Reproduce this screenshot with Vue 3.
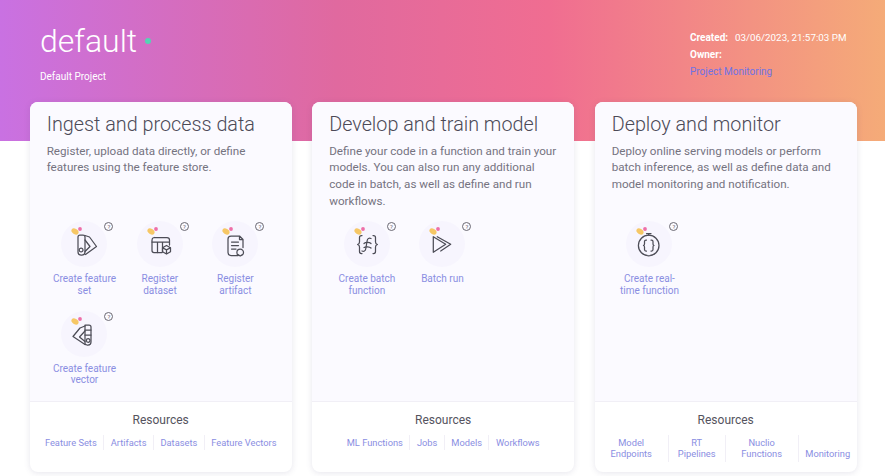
<script setup>
const cards = [
  {
    title: 'Ingest and process data',
    text: 'Register, upload data directly, or define features using the feature store.',
    actions: [
      { icon: 'fan', label: 'Create feature set' },
      { icon: 'table', label: 'Register dataset' },
      { icon: 'doc', label: 'Register artifact' },
      { icon: 'vector', label: 'Create feature vector' }
    ],
    links: ['Feature Sets', 'Artifacts', 'Datasets', 'Feature Vectors']
  },
  {
    title: 'Develop and train model',
    text: 'Define your code in a function and train your models. You can also run any additional code in batch, as well as define and run workflows.',
    actions: [
      { icon: 'code', label: 'Create batch function' },
      { icon: 'play', label: 'Batch run' }
    ],
    links: ['ML Functions', 'Jobs', 'Models', 'Workflows']
  },
  {
    title: 'Deploy and monitor',
    text: 'Deploy online serving models or perform batch inference, as well as define data and model monitoring and notification.',
    actions: [{ icon: 'timer', label: 'Create real-time function' }],
    links: ['Model Endpoints', 'RT Pipelines', 'Nuclio Functions', 'Monitoring'],
    wrapLinks: true
  }
]

const icons = {
  fan: [
    'M17 16a2 2 0 0 1 2-2h3a2 2 0 0 1 2 2v15a3 3 0 0 1-3 3h-1a3 3 0 0 1-3-3z',
    'M24 14.500l4.500 1.500 7 9.500-11 8',
    'M24 19l5 6.500-5 5',
    'M22 29a1.900 1.900 0 1 1-3.800 0a1.900 1.900 0 1 1 3.800 0z'
  ],
  table: [
    'M17 16.500h13a2.500 2.500 0 0 1 2.500 2.500v5M15 19a2.500 2.500 0 0 1 2-2.500M15 19v10.500a2 2 0 0 0 2 2h8',
    'M15 21h17.500M20.500 21v10.500M25.500 21v10',
    'M29.500 24.500l4 2.200v4l-4 2.300-4-2.300v-4zM25.500 26.700l4 2.200 4-2.200M29.500 28.900v4'
  ],
  doc: [
    'M19 15h8.500l3.500 3.500v8M31 18.500h-3.500V15M26 34.500h-7a3 3 0 0 1-3-3V18a3 3 0 0 1 3-3',
    'M19.500 21h7M19.500 24.500h7M19.500 28h4.500',
    'M31.500 31.500a3.300 3.300 0 1 1-6.600 0a3.300 3.300 0 1 1 6.600 0zM26 33.500l2.200 1.500 2.300-1.500'
  ],
  vector: [
    'M24 14h4a2 2 0 0 1 2 2v15a3 3 0 0 1-3 3h-1a3 3 0 0 1-2-1z',
    'M24 15l-5 2-7 8.500 12 8',
    'M24 20l-5.500 6 5.500 4.500',
    'M24 19h6M24 24h6',
    'M29 29.500a1.800 1.800 0 1 1-3.600 0a1.800 1.800 0 1 1 3.600 0z'
  ],
  code: [
    'M18 14.500h-.500a2 2 0 0 0-2 2v4.500a2.500 2.500 0 0 1-2 2.500a2.500 2.500 0 0 1 2 2.500v4.500a2 2 0 0 0 2 2h.500',
    'M29 14.500h.500a2 2 0 0 1 2 2v4.500a2.500 2.500 0 0 0 2 2.500a2.500 2.500 0 0 0-2 2.500v4.500a2 2 0 0 1-2 2H29',
    'M27 17.500c-2-.800-3.500 0-3.800 2l-1.500 8.500c-.300 2-1.800 2.800-3.700 2',
    'M20 22.500c1.500-1.500 5.500-1.500 7 0M20 26.500c1.500-1 5.500-1 7 .500'
  ],
  play: [
    'M14.300 15.700V31.300L26.700 23.300z',
    'M18.300 15.700L31.700 23.300 21.700 30'
  ],
  timer: [
    'M33 24.500a10.300 10.300 0 1 1-20.600 0a10.300 10.300 0 1 1 20.600 0z',
    'M20.500 12.500h4.500M22.700 12.500v1.700',
    'M20.500 19h-.500a1.500 1.500 0 0 0-1.500 1.500v2.500a1.500 1.500 0 0 1-1 1.500a1.500 1.500 0 0 1 1 1.500v2.500a1.500 1.500 0 0 0 1.500 1.500h.500',
    'M25 19h.500a1.500 1.500 0 0 1 1.500 1.500v2.500a1.500 1.500 0 0 0 1 1.500a1.500 1.500 0 0 0-1 1.500v2.500a1.500 1.500 0 0 1-1.500 1.500H25'
  ]
}
</script>

<template>
  <div class="page">
    <header class="hero">
      <div>
        <h1 class="project-name">default <span class="status-dot"></span></h1>
        <p class="project-desc">Default Project</p>
      </div>
      <div class="meta">
        <div class="meta-row"><b>Created:</b><span>03/06/2023, 21:57:03 PM</span></div>
        <div class="meta-row"><b>Owner:</b></div>
        <a class="meta-link">Project Monitoring</a>
      </div>
    </header>

    <main class="cards">
      <section v-for="card in cards" :key="card.title" class="card">
        <div class="card-body">
          <div class="card-head">
            <h2 class="card-title">{{ card.title }}</h2>
            <p class="card-text">{{ card.text }}</p>
          </div>
          <div class="actions">
            <div v-for="action in card.actions" :key="action.label" class="action">
              <div class="action-icon">
                <svg width="46" height="46" viewBox="0 0 46 46" fill="none">
                  <ellipse cx="14" cy="10.500" rx="3.900" ry="2.600" transform="rotate(35 14 10.500)" fill="#f6c765" />
                  <circle cx="19" cy="8" r="1.900" fill="#ee6fa8" />
                  <path
                    v-for="d in icons[action.icon]"
                    :key="d"
                    :d="d"
                    stroke="#4d4d57"
                    stroke-width="1.250"
                    stroke-linecap="round"
                    stroke-linejoin="round"
                  />
                </svg>
                <span class="help">?</span>
              </div>
              <div class="action-label">{{ action.label }}</div>
            </div>
          </div>
        </div>
        <footer class="card-footer">
          <div class="res-title">Resources</div>
          <div class="links" :class="{ 'links-wrap': card.wrapLinks }">
            <a v-for="link in card.links" :key="link" class="res-link">{{ link }}</a>
          </div>
        </footer>
      </section>
    </main>
  </div>
</template>

<style scoped>
.page {
  width: 885px;
  height: 476px;
  overflow: hidden;
  background: #fff;
  font-family: Roboto, "Liberation Sans", sans-serif;
}

.hero {
  height: 141px;
  box-sizing: border-box;
  padding: 19px 37px 0 40px;
  display: flex;
  justify-content: space-between;
  color: #fff;
  background: linear-gradient(90deg, #c971e2 0%, #e0699f 38%, #f06d91 62%, #f5ab78 100%);
}

.project-name {
  margin: 0;
  font-size: 32px;
  line-height: 44px;
  font-weight: 300;
}

.status-dot {
  display: inline-block;
  width: 6px;
  height: 6px;
  border-radius: 50%;
  background: #55d3b4;
  vertical-align: 8px;
}

.project-desc {
  margin: 7px 0 0;
  font-size: 10px;
  line-height: 14px;
}

.meta {
  width: 158px;
  margin-top: 10px;
  font-size: 10px;
  line-height: 17px;
  white-space: nowrap;
}

.meta-row b {
  display: inline-block;
  width: 45px;
  font-weight: 700;
}

.meta-row span {
  font-size: 9.800px;
}

.meta-link {
  color: #6f73e4;
}

.cards {
  display: grid;
  grid-template-columns: repeat(3, 1fr);
  column-gap: 20.5px;
  padding: 0 28.3px 0 29.7px;
  margin-top: -39px;
}

.card {
  height: 370px;
  display: flex;
  flex-direction: column;
  background: #fff;
  border-radius: 8px;
  box-shadow: 0 1px 6px rgba(80, 70, 120, 0.14);
  overflow: hidden;
}

.card-body {
  height: 300px;
  box-sizing: border-box;
  padding: 11px 0 0;
  background: #fbfaff;
  border-bottom: 1px solid #f1eff6;
}

.card-head {
  height: 108px;
  padding: 0 16px 0 17px;
}

.card-title {
  margin: 0;
  font-size: 19.800px;
  line-height: 24px;
  font-weight: 300;
  color: #4c4a57;
}

.card-text {
  margin: 5.500px 0 0;
  font-size: 11.650px;
  line-height: 16.900px;
  font-weight: 400;
  color: #75737f;
}

.actions {
  display: grid;
  grid-template-columns: repeat(3, 75.5px);
  grid-auto-rows: 89.5px;
  padding-left: 17px;
}

.action {
  display: flex;
  flex-direction: column;
  align-items: center;
}

.action-icon {
  position: relative;
  width: 46px;
  height: 46px;
  border-radius: 50%;
  background: #f7f5fe;
}

.action-icon svg {
  display: block;
}

.help {
  position: absolute;
  left: 43px;
  top: 1px;
  width: 7px;
  height: 7px;
  border: 1px solid #6b6973;
  border-radius: 50%;
  font-size: 6px;
  line-height: 7px;
  text-align: center;
  color: #6b6973;
}

.action-label {
  width: 66px;
  margin-top: 6px;
  font-size: 10px;
  line-height: 11.500px;
  text-align: center;
  color: #8a8ee2;
}

.card-footer {
  flex: 1;
  text-align: center;
  padding-top: 10px;
}

.res-title {
  font-size: 12px;
  line-height: 16px;
  color: #55535e;
}

.links {
  display: flex;
  justify-content: center;
  margin-top: 7px;
}

.res-link {
  padding: 2px 6.500px;
  font-size: 9.300px;
  line-height: 11px;
  color: #8a8ee2;
  white-space: nowrap;
  border-left: 1px solid #f1eff6;
}

.res-link:first-child {
  border-left: 0;
}

.links-wrap {
  display: grid;
  grid-template-columns: 73px 57px 73px 59px;
  margin-top: 7px;
}

.links-wrap .res-link {
  display: flex;
  align-items: flex-end;
  justify-content: center;
  padding: 2px 10px 3px;
  white-space: normal;
}

.links-wrap .res-link:last-child {
  padding: 2px 0 3px;
}
</style>
